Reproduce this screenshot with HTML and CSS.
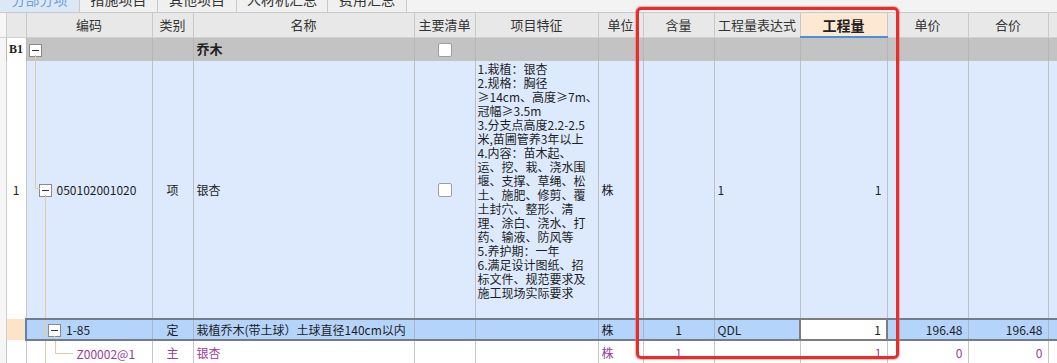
FILE: index.html
```html
<!DOCTYPE html>
<html lang="zh">
<head>
<meta charset="utf-8">
<title>分部分项</title>
<link rel="stylesheet" href="styles.css">
</head>
<body>
<div class="tabs">
  <div class="tab t1 active">分部分项</div>
  <div class="tab t2">措施项目</div>
  <div class="tab t3">其他项目</div>
  <div class="tab t4">人材机汇总</div>
  <div class="tab t5">费用汇总</div>
</div>
<table class="grid">
  <colgroup>
    <col class="c-gut"><col class="c-rn"><col class="c-code"><col class="c-type"><col class="c-name"><col class="c-main"><col class="c-feat"><col class="c-unit"><col class="c-cont"><col class="c-expr"><col class="c-qty"><col class="c-price"><col class="c-total"><col class="c-extra">
  </colgroup>
  <thead>
    <tr>
      <th class="gut"></th><th></th><th>编码</th><th>类别</th><th>名称</th><th>主要清单</th><th>项目特征</th><th>单位</th><th>含量</th><th>工程量表达式</th><th class="hl">工程量</th><th>单价</th><th>合价</th><th></th>
    </tr>
  </thead>
  <tbody>
    <tr class="r-b1">
      <td class="gut"></td>
      <td class="rn b1">B1</td>
      <td class="code lv0"><span class="tbox"><span class="minus"></span></span><span class="tl l-b1v"></span></td>
      <td></td>
      <td class="bold">乔木</td>
      <td class="ctr"><span class="cb"></span></td>
      <td></td><td></td><td></td><td></td><td></td><td></td><td></td><td></td>
    </tr>
    <tr class="r-1">
      <td class="gut"></td>
      <td class="rn">1</td>
      <td class="code lv1"><span class="tl l-r1a"></span><span class="tl l-r1b"></span><span class="tl l-r1c"></span><span class="tbox"><span class="minus"></span></span><span class="ctext">050102001020</span></td>
      <td class="ctr">项</td>
      <td>银杏</td>
      <td class="ctr"><span class="cb"></span></td>
      <td class="feat"><div class="ftext">1.栽植：银杏<br>2.规格：胸径<br>≥14cm、高度≥7m、<br>冠幅≥3.5m<br>3.分支点高度2.2-2.5<br>米,苗圃管养3年以上<br>4.内容：苗木起、<br>运、挖、栽、浇水围<br>堰、支撑、草绳、松<br>土、施肥、修剪、覆<br>土封穴、整形、清<br>理、涂白、浇水、打<br>药、输液、防风等<br>5.养护期：一年<br>6.满足设计图纸、招<br>标文件、规范要求及<br>施工现场实际要求</div></td>
      <td>株</td>
      <td></td>
      <td>1</td>
      <td class="num">1</td>
      <td></td><td></td><td></td>
    </tr>
    <tr class="r-q">
      <td class="gut"></td>
      <td class="rn sel"></td>
      <td class="code lv2"><span class="tl l-qa"></span><span class="tl l-qb"></span><span class="tl l-qc"></span><span class="tbox"><span class="minus"></span></span><span class="ctext">1-85</span></td>
      <td class="ctr">定</td>
      <td>栽植乔木(带土球）土球直径140cm以内</td>
      <td></td>
      <td></td>
      <td>株</td>
      <td class="ctr">1</td>
      <td>QDL</td>
      <td class="num input">1</td>
      <td class="num">196.48</td>
      <td class="num">196.48</td>
      <td></td>
    </tr>
    <tr class="r-z">
      <td class="gut"></td>
      <td class="rn"></td>
      <td class="code lv3"><span class="tl l-za"></span><span class="tl l-zb"></span><span class="tl l-zc"></span><span class="ctext">Z00002@1</span></td>
      <td class="ctr">主</td>
      <td>银杏</td>
      <td></td>
      <td></td>
      <td>株</td>
      <td class="ctr">1</td>
      <td></td>
      <td class="num">1</td>
      <td class="num">0</td>
      <td class="num">0</td>
      <td></td>
    </tr>
  </tbody>
</table>
<div class="redbox"></div>
</body>
</html>
```

FILE: styles.css
```css
html, body {
  margin: 0;
  padding: 0;
}
body {
  width: 1057px;
  height: 363px;
  overflow: hidden;
  position: relative;
  background: #f3f3f3;
  font-family: "Noto Sans CJK SC", "Liberation Sans", sans-serif;
  color: #1e1e1e;
}

/* tabs */
.tabs {
  display: flex;
  height: 12px;
  border-bottom: 1px solid #c9c9c9;
  overflow: hidden;
  background: #f3f3f3;
}
.tab {
  height: 26px;
  margin-top: -14px;
  line-height: 26px;
  font-size: 14px;
  text-align: center;
  color: #333;
  background: #f0f0f0;
  border-right: 1px solid #c9c9c9;
  flex: none;
}
.tab.active {
  background: #dde8f6;
  color: #6e9fd9;
}
.t1 { width: 79px; }
.t2 { width: 77px; }
.t3 { width: 78px; }
.t4 { width: 90px; }
.t5 { width: 78px; }

/* grid */
.grid {
  border-collapse: collapse;
  table-layout: fixed;
  width: 1078px;
}
.c-gut { width: 6px; }
.c-rn { width: 20px; }
.c-code { width: 126px; }
.c-type { width: 41px; }
.c-name { width: 221px; }
.c-main { width: 61px; }
.c-feat { width: 123px; }
.c-unit { width: 45px; }
.c-cont { width: 71px; }
.c-expr { width: 86px; }
.c-qty { width: 87px; }
.c-price { width: 81px; }
.c-total { width: 80px; }
.c-extra { width: 30px; }

th {
  height: 23px;
  padding: 0;
  background: #e8e8e8;
  border-left: 1px solid #c8c8c8;
  border-right: 1px solid #c8c8c8;
  border-bottom: 1px solid #d0d0d0;
  font-weight: normal;
  font-size: 13px;
  color: #333;
  white-space: nowrap;
  overflow: hidden;
}
th.hl {
  background: #fde8d1;
  font-weight: bold;
  font-size: 14px;
  color: #222;
  border-bottom: 2px solid #4a8fe0;
}
th.gut, td.gut {
  background: #f6f6f6;
  border-left: none;
  border-right: 1px solid #cfcfcf;
  padding: 0;
}

td {
  padding: 0 3px;
  font-size: 12px;
  line-height: 14px;
  white-space: nowrap;
  overflow: hidden;
  vertical-align: middle;
  border-left: 1px solid #bcc1c8;
  border-right: 1px solid #bcc1c8;
}
td.ctr { text-align: center; }
td.num { text-align: right; padding-right: 5px; }
td.bold { font-weight: bold; font-size: 13px; }

td.rn {
  background: #fff;
  text-align: center;
  padding: 0;
  border-right: 1px solid #c8c8c8;
}
td.rn.b1 {
  font-family: "Liberation Serif", serif;
  font-weight: bold;
  font-size: 12px;
}
td.rn.sel { background: #fde4c6; }

.r-b1 td { height: 23px; background: #c3c3c3; border-color: #b6b6b6; }
.r-b1 td.rn { background: #fff; }
.r-b1 td.gut { background: #f6f6f6; }

.r-1 td { height: 256px; background: #dde9fd; }
.r-1 td.rn { background: #fff; }
.r-1 td.gut { background: #f6f6f6; }

.r-q td {
  height: 19px;
  background: #b5d4fb;
  border-top: 2px solid #727d8c;
  border-bottom: 2px solid #727d8c;
  border-left-color: #a9b6c8;
  border-right-color: #a9b6c8;
}
.r-q td.gut { background: #f6f6f6; border-top: none; border-bottom: none; border-right-color: #cfcfcf; }
.r-q td.rn { background: #fde4c6; border-top: none; border-bottom: none; border-right: none; }
.r-q td.code { border-left: 2px solid #5a80b8; }
.r-q td.input {
  background: #fff;
  border: 2px solid #7d7d7d;
}

.r-z td { height: 23px; background: #fff; color: #993d99; border-color: #c8c8c8; }
.r-z td.gut { background: #f6f6f6; }

/* feature */
td.feat {
  vertical-align: top;
  padding: 1px 2px 0 2px;
  white-space: nowrap;
}
.ftext { line-height: 14px; font-size: 12px; }

/* tree */
td.code { position: relative; }
td.code.lv0 { padding-left: 2px; }
td.code.lv1 { padding-left: 12px; }
td.code.lv2 { padding-left: 21px; }
td.code.lv3 { padding-left: 50px; }
.tbox {
  display: inline-flex;
  align-items: center;
  justify-content: center;
  width: 11px;
  height: 11px;
  border: 1px solid #8a8a8a;
  background: #fff;
  vertical-align: middle;
  box-sizing: content-box;
}
.minus {
  display: block;
  width: 7px;
  height: 1px;
  background: #333;
}
.ctext { margin-left: 5px; vertical-align: middle; }
.lv3 .ctext { margin-left: 0; }
.tl { position: absolute; background: #e6caa4; }
.l-b1v { left: 8px; top: 17px; width: 1px; height: 8px; }
.l-r1a { left: 8px; top: 0; width: 1px; height: 127px; }
.l-r1b { left: 8px; top: 127px; width: 5px; height: 1px; }
.l-r1c { left: 18px; top: 134px; width: 1px; height: 124px; }
.l-qa { left: 17px; top: 0; width: 1px; height: 22px; }
.l-qb { left: 17px; top: 10px; width: 4px; height: 1px; }
.l-qc { left: 27px; top: 16px; width: 1px; height: 8px; }
.l-za { left: 18px; top: 0; width: 1px; height: 24px; }
.l-zb { left: 28px; top: 0; width: 1px; height: 12px; }
.l-zc { left: 28px; top: 12px; width: 18px; height: 1px; }

.cb {
  display: inline-block;
  width: 12px;
  height: 12px;
  border: 1px solid #9e9e9e;
  border-radius: 2px;
  background: #fff;
  vertical-align: middle;
}

.redbox {
  position: absolute;
  left: 636px;
  top: 7px;
  width: 263px;
  height: 352px;
  box-sizing: border-box;
  border: 3px solid #e4302c;
  border-radius: 5px;
  box-shadow: 0 0 1px 1px rgba(240, 110, 110, 0.55);
  pointer-events: none;
}
```
